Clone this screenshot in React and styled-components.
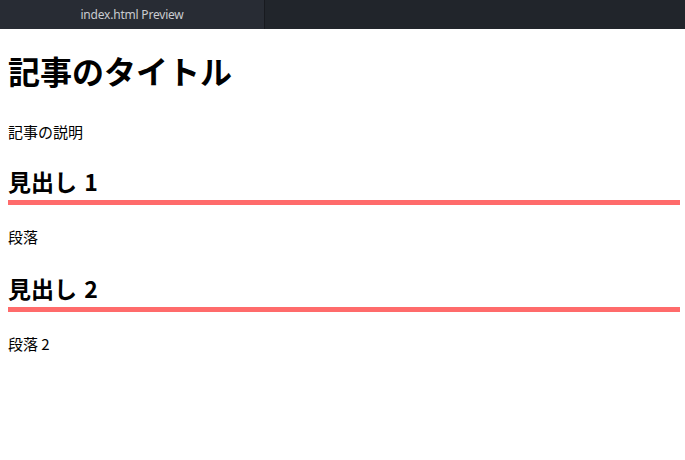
import React from 'react';
import styled, { createGlobalStyle } from 'styled-components';

const GlobalStyle = createGlobalStyle`
  html, body {
    margin: 0;
    padding: 0;
    background: #ffffff;
  }
  body {
    font-family: "Noto Sans CJK JP", "Noto Sans", sans-serif;
    color: #000;
  }
`;

const TabBar = styled.div`
  display: flex;
  height: 29px;
  background: #21252b;
`;

const Tab = styled.div`
  width: 264px;
  display: flex;
  align-items: center;
  justify-content: center;
  background: #282c34;
  border-right: 1px solid #181a1f;
  color: #c9cbd0;
  font-family: "Noto Sans", sans-serif;
  font-size: 12px;
  letter-spacing: -0.2px;
`;

const Article = styled.main`
  padding: 0 5px 0 8px;
`;

const Title = styled.h1`
  margin: 21px 0 30px;
  font-size: 32px;
  line-height: 40px;
  font-weight: 700;
`;

const Text = styled.p`
  margin: 0;
  font-size: 15px;
  line-height: 24px;
`;

const Section = styled.section`
  & + & {
    padding-top: 2px;
  }
`;

const Heading = styled.h2`
  margin: 21px 0 20px;
  padding-bottom: 3px;
  border-bottom: 5px solid #ff6b6b;
  font-size: 23px;
  line-height: 32px;
  font-weight: 700;
  word-spacing: 2px;
`;

const sections = [
  { heading: '見出し 1', body: '段落' },
  { heading: '見出し 2', body: '段落 2' },
];

const App = () => (
  <>
    <GlobalStyle />
    <TabBar>
      <Tab>index.html Preview</Tab>
    </TabBar>
    <Article>
      <Title>記事のタイトル</Title>
      <Text>記事の説明</Text>
      {sections.map(s => (
        <Section key={s.heading}>
          <Heading>{s.heading}</Heading>
          <Text>{s.body}</Text>
        </Section>
      ))}
    </Article>
  </>
);

export default App;
